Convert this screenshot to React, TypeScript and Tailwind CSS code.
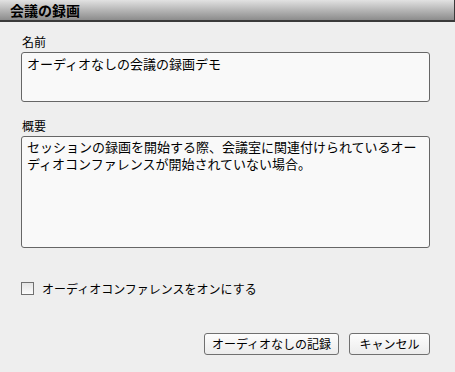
export default function App() {
  const font = { fontFamily: '"Noto Sans CJK JP", "Noto Sans", sans-serif' };
  return (
    <div className="w-[455px] h-[372px] bg-[#eeeeee] text-black overflow-hidden" style={font}>
      <div className="h-[22px] bg-gradient-to-b from-[#e2e2e2] to-[#8c8c8c] border-b-2 border-r border-[#3a3a3a] pl-[10px] flex items-center">
        <span className="text-[14px] font-bold leading-none">会議の録画</span>
      </div>

      <div className="px-[21px] pr-[25px]">
        <label className="block mt-[12px] text-[12px] leading-[16px] pl-[1px]">名前</label>
        <div className="mt-[2px] h-[50px] rounded-[3px] border border-[#666666] bg-[#f9f9f9] px-[5px] pt-[2px] text-[13px] leading-[17px]">
          オーディオなしの会議の録画デモ
        </div>

        <label className="block mt-[16px] text-[12px] leading-[16px] pl-[1px]">概要</label>
        <div className="mt-[2px] h-[112px] rounded-[3px] border border-[#666666] bg-[#f9f9f9] px-[5px] pt-[1px] text-[13px] leading-[17px]">
          セッションの録画を開始する際、会議室に関連付けられているオーディオコンファレンスが開始されていない場合。
        </div>

        <label className="mt-[34px] flex items-center gap-[8px] text-[12px] leading-none">
          <span className="w-[13px] h-[13px] border border-[#707070] bg-gradient-to-b from-[#e4e4e4] to-[#fbfbfb]" />
          オーディオコンファレンスをオンにする
        </label>

        <div className="mt-[38px] flex justify-end gap-[10px]">
          <button className="w-[135px] h-[22px] rounded-[3px] border border-[#707070] bg-gradient-to-b from-[#fdfdfd] to-[#ececec] text-[12px] leading-none">
            オーディオなしの記録
          </button>
          <button className="w-[81px] h-[22px] rounded-[3px] border border-[#707070] bg-gradient-to-b from-[#fdfdfd] to-[#ececec] text-[12px] leading-none">
            キャンセル
          </button>
        </div>
      </div>
    </div>
  );
}
